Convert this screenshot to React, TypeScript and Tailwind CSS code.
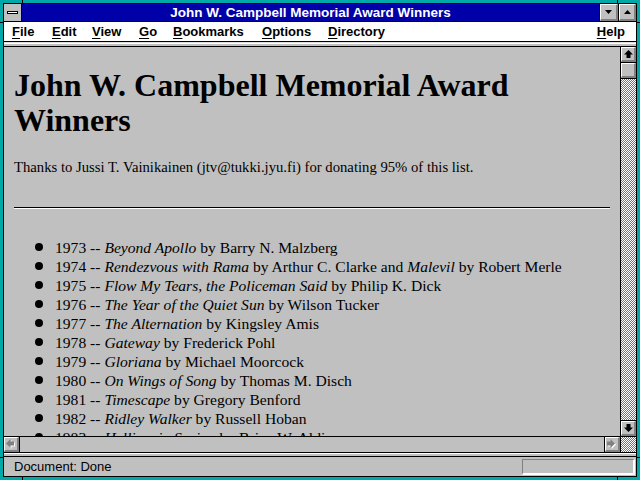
import React from 'react'

const dither =
  'bg-[repeating-conic-gradient(#00a8a8_0%_25%,#ffffff_0%_50%)] bg-[length:2px_2px]'

const bevel = 'bg-[#c0c0c0] border-t border-l border-white border-r-2 border-b-2 border-r-[#808080] border-b-[#808080]'

function ArrowUp() {
  return (
    <svg width="9" height="8" viewBox="0 0 9 8">
      <path d="M4.5 0 L9 4.5 H6.5 V8 H2.5 V4.5 H0 Z" fill="#000" />
    </svg>
  )
}

function ArrowDown() {
  return (
    <svg width="9" height="8" viewBox="0 0 9 8">
      <path d="M4.5 8 L9 3.5 H6.5 V0 H2.5 V3.5 H0 Z" fill="#000" />
    </svg>
  )
}

function ArrowSide({ right }: { right?: boolean }) {
  const d = right ? 'M8 4.5 L3.5 0 V2.5 H0 V6.5 H3.5 V9 Z' : 'M0 4.5 L4.5 0 V2.5 H8 V6.5 H4.5 V9 Z'
  return (
    <svg width="10" height="10" viewBox="0 0 10 10">
      <path d={d} transform="translate(1 1)" fill="#fff" />
      <path d={d} fill="#808080" />
    </svg>
  )
}

const menu = [
  { label: 'File', w: 'w-[40px]' },
  { label: 'Edit', w: 'w-[40px]' },
  { label: 'View', w: 'w-[47px]' },
  { label: 'Go', w: 'w-[34px]' },
  { label: 'Bookmarks', w: 'w-[89px]' },
  { label: 'Options', w: 'w-[66px]' },
  { label: 'Directory', w: 'w-[80px]' },
]

type Winner = { year: string; title: string; author: string; extra?: { title: string; author: string } }

const winners: Winner[] = [
  { year: '1973', title: 'Beyond Apollo', author: 'Barry N. Malzberg' },
  {
    year: '1974',
    title: 'Rendezvous with Rama',
    author: 'Arthur C. Clarke',
    extra: { title: 'Malevil', author: 'Robert Merle' },
  },
  { year: '1975', title: 'Flow My Tears, the Policeman Said', author: 'Philip K. Dick' },
  { year: '1976', title: 'The Year of the Quiet Sun', author: 'Wilson Tucker' },
  { year: '1977', title: 'The Alternation', author: 'Kingsley Amis' },
  { year: '1978', title: 'Gateway', author: 'Frederick Pohl' },
  { year: '1979', title: 'Gloriana', author: 'Michael Moorcock' },
  { year: '1980', title: 'On Wings of Song', author: 'Thomas M. Disch' },
  { year: '1981', title: 'Timescape', author: 'Gregory Benford' },
  { year: '1982', title: 'Ridley Walker', author: 'Russell Hoban' },
  { year: '1983', title: 'Helliconia Spring', author: 'Brian W. Aldiss' },
]

export default function App() {
  return (
    <div className="w-[640px] h-[480px] bg-[#00a8a8] p-[3px] relative overflow-hidden">
      <div className="w-full h-full border border-black flex flex-col bg-[#c0c0c0] font-['Liberation_Sans',Arial,sans-serif]">
        {/* title bar */}
        <div className="h-[18px] flex border-b border-black bg-[#0000a8] shrink-0">
          <div className="w-[18px] h-[17px] bg-[#c0c0c0] border-r border-black flex items-center justify-center">
            <div className="w-[11px] h-[3px] bg-white border border-black" />
          </div>
          <div className="flex-1 text-center text-white font-bold text-[13.5px] leading-[17px]">
            John W. Campbell Memorial Award Winners
          </div>
          <div className="w-[19px] h-[17px] border-l border-black flex">
            <div className={`${bevel} w-full h-full flex items-center justify-center`}>
              <svg width="7" height="4" viewBox="0 0 7 4">
                <path d="M0 0 H7 L3.5 4 Z" fill="#000" />
              </svg>
            </div>
          </div>
          <div className="w-[18px] h-[17px] border-l border-black flex">
            <div className={`${bevel} w-full h-full flex items-center justify-center`}>
              <svg width="7" height="4" viewBox="0 0 7 4">
                <path d="M0 4 H7 L3.5 0 Z" fill="#000" />
              </svg>
            </div>
          </div>
        </div>

        {/* menu bar */}
        <div className="h-[20px] bg-white border-b border-black flex items-center pl-[8px] pr-[11px] text-[13px] font-bold text-black shrink-0">
          {menu.map(m => (
            <div key={m.label} className={m.w}>
              <span className="underline underline-offset-2">{m.label[0]}</span>
              {m.label.slice(1)}
            </div>
          ))}
          <div className="ml-auto">
            <span className="underline underline-offset-2">H</span>elp
          </div>
        </div>

        {/* toolbar edge */}
        <div className="h-[5px] border-b border-black shrink-0 flex flex-col">
          <div className="h-px bg-[#e0e0e0]" />
          <div className="h-px bg-white" />
          <div className="flex-1 bg-[#c0c0c0]" />
        </div>

        {/* content + vertical scrollbar */}
        <div className="h-[389px] flex shrink-0">
          <div className="flex-1 overflow-hidden px-[10px] font-['Liberation_Serif','Times_New_Roman',serif] text-black">
            <h1 className="mt-[21px] text-[32px] leading-[35px] font-bold">
              John W. Campbell Memorial Award Winners
            </h1>
            <p className="mt-[20px] text-[14.7px] leading-[18px]">
              Thanks to Jussi T. Vainikainen (jtv@tukki.jyu.fi) for donating 95% of this list.
            </p>
            <div className="mt-[31px] border-t border-black border-b border-b-white" />
            <ul className="mt-[29px] text-[15.6px] leading-[19px]">
              {winners.map(w => (
                <li key={w.year} className="flex items-start">
                  <span className="ml-[21px] mt-[5px] w-[8px] h-[8px] rounded-full bg-black shrink-0" />
                  <span className="ml-[12px] whitespace-nowrap">
                    {w.year} -- <i>{w.title}</i> by {w.author}
                    {w.extra && (
                      <>
                        {' '}and <i>{w.extra.title}</i> by {w.extra.author}
                      </>
                    )}
                  </span>
                </li>
              ))}
            </ul>
          </div>
          <div className="w-[16px] border-l border-black flex flex-col">
            <div className={`${bevel} h-[15px] flex items-center justify-center`}>
              <ArrowUp />
            </div>
            <div className="h-px bg-black" />
            <div className={`${bevel} h-[15px]`} />
            <div className="h-px bg-black" />
            <div className={`flex-1 ${dither}`} />
            <div className="h-px bg-black" />
            <div className={`${bevel} h-[15px] flex items-center justify-center`}>
              <ArrowDown />
            </div>
          </div>
        </div>

        {/* horizontal scrollbar */}
        <div className="h-[17px] border-t border-b border-black flex shrink-0">
          <div className={`${bevel} w-[15px] h-full flex items-center justify-center`}>
            <ArrowSide />
          </div>
          <div className="flex-1 border-l border-r border-black bg-[#c0c0c0]" />
          <div className={`${bevel} w-[15px] h-full flex items-center justify-center`}>
            <ArrowSide right />
          </div>
          <div className={`w-[16px] border-l border-black ${dither}`} />
        </div>

        {/* separator */}
        <div className="h-[4px] border-b border-black flex flex-col shrink-0">
          <div className="h-px bg-white" />
          <div className="flex-1 bg-[#c0c0c0]" />
        </div>

        {/* status bar */}
        <div className="flex-1 flex items-center pl-[10px] pr-[1px] text-[13px] text-black">
          <span>Document: Done</span>
          <div className="ml-auto w-[113px] h-[16px] border-t border-l border-[#808080] border-b-2 border-r-2 border-b-white border-r-white" />
        </div>
      </div>
      {/* frame corner marks */}
      <div className="absolute left-[22px] bottom-0 w-px h-[3px] bg-black" />
      <div className="absolute right-[22px] bottom-0 w-px h-[3px] bg-black" />
      <div className="absolute left-[22px] top-0 w-px h-[3px] bg-black" />
      <div className="absolute right-[22px] top-0 w-px h-[3px] bg-black" />
      <div className="absolute left-0 top-[22px] h-px w-[3px] bg-black" />
      <div className="absolute right-0 top-[22px] h-px w-[3px] bg-black" />
      <div className="absolute left-0 bottom-[22px] h-px w-[3px] bg-black" />
      <div className="absolute right-0 bottom-[22px] h-px w-[3px] bg-black" />
    </div>
  )
}
